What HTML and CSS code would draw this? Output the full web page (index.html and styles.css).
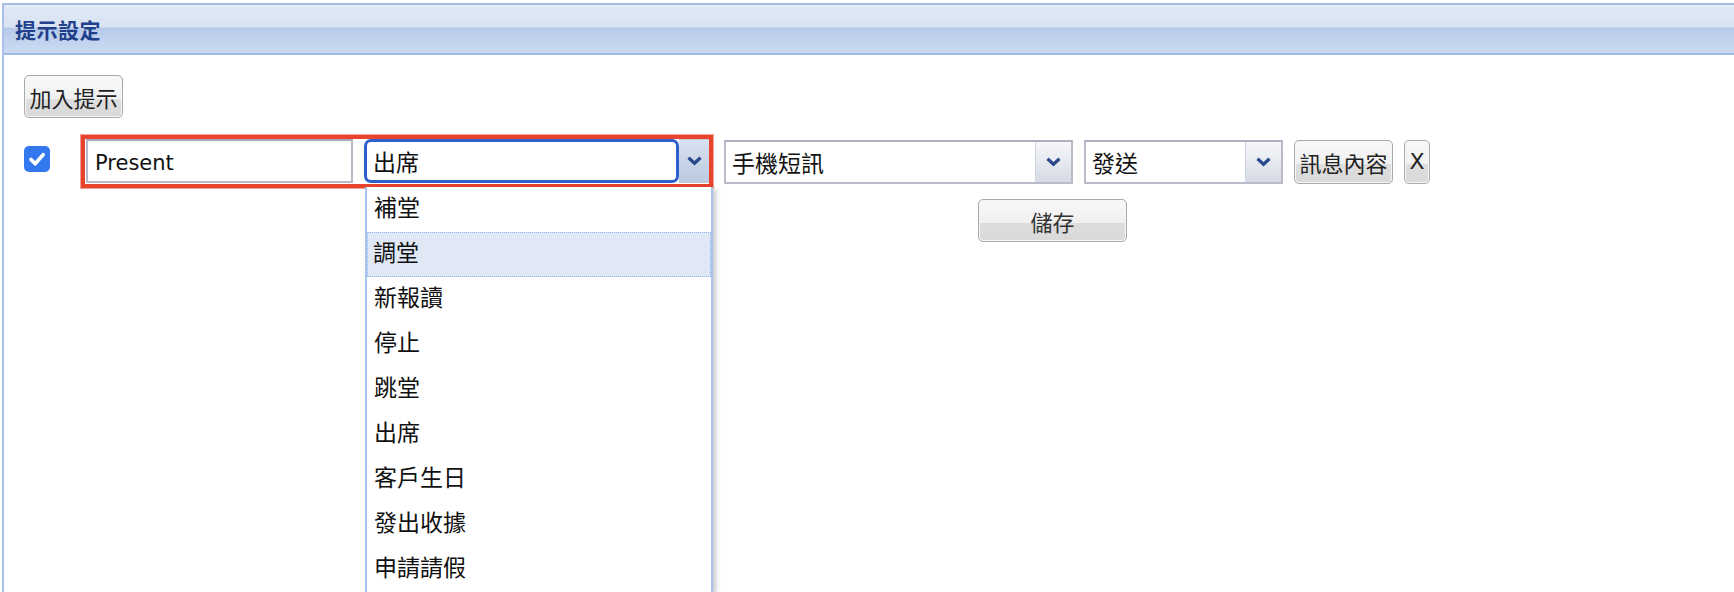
FILE: index.html
```html
<!DOCTYPE html>
<html lang="zh-Hant">
<head>
<meta charset="utf-8">
<title>提示設定</title>
<link rel="stylesheet" href="styles.css">
</head>
<body>
<div class="panel">
  <div class="panel-header"><span class="panel-title">提示設定</span></div>
  <div class="panel-body">
    <button class="btn btn-add">加入提示</button>
    <div class="rule-row">
      <span class="check">
        <svg width="26" height="26" viewBox="0 0 26 26"><rect width="26" height="26" rx="5" fill="#3478f0"/><path d="M7 13.5 L11.2 17.8 L19.2 8.6" fill="none" stroke="#fff" stroke-width="3.6" stroke-linecap="round" stroke-linejoin="round"/></svg>
      </span>
      <div class="mark-box">
        <input class="text-input" type="text" value="Present">
        <div class="combo-focus">
          <span class="focus-value">出席</span>
          <span class="arrow arrow-focus"><svg width="15" height="10" viewBox="0 0 15 10"><path d="M1.5 1.8 L7.5 7.3 L13.5 1.8" fill="none" stroke="#2b4a8c" stroke-width="3.2"/></svg></span>
          <ul class="combo-list">
            <li class="combo-item">補堂</li>
            <li class="combo-item combo-item-hover">調堂</li>
            <li class="combo-item">新報讀</li>
            <li class="combo-item">停止</li>
            <li class="combo-item">跳堂</li>
            <li class="combo-item">出席</li>
            <li class="combo-item">客戶生日</li>
            <li class="combo-item">發出收據</li>
            <li class="combo-item">申請請假</li>
          </ul>
        </div>
      </div>
      <div class="combo combo-sms">
        <span class="combo-value">手機短訊</span>
        <span class="arrow"><svg width="15" height="10" viewBox="0 0 15 10"><path d="M1.5 1.8 L7.5 7.3 L13.5 1.8" fill="none" stroke="#2b4a8c" stroke-width="3.2"/></svg></span>
      </div>
      <div class="combo combo-send">
        <span class="combo-value">發送</span>
        <span class="arrow"><svg width="15" height="10" viewBox="0 0 15 10"><path d="M1.5 1.8 L7.5 7.3 L13.5 1.8" fill="none" stroke="#2b4a8c" stroke-width="3.2"/></svg></span>
      </div>
      <button class="btn btn-msg">訊息內容</button>
      <button class="btn btn-x">X</button>
    </div>
    <div class="save-row"><button class="btn btn-save">儲存</button></div>
  </div>
</div>
</body>
</html>
```
FILE: styles.css
```css
html, body {
  margin: 0;
  padding: 0;
  background: #ffffff;
  height: 100%;
  overflow: hidden;
}
body {
  font-family: "DejaVu Sans", "Noto Sans CJK TC", sans-serif;
  color: #111;
}
.panel {
  margin: 3px 0 0 2px;
  border-left: 2px solid #a9c1e8;
  height: 100%;
  box-sizing: border-box;
}
.panel-header {
  height: 48px;
  border-top: 2px solid #a3bde5;
  border-bottom: 2px solid #a0bbe5;
  background: linear-gradient(to bottom, #e9eff9 0px, #dfe8f5 2px, #d8e3f3 22px, #b5c9ea 23px, #c0d2ee 34px, #cbdaf1 48px);
  display: flex;
  align-items: center;
  padding-left: 11px;
}
.panel-title {
  font-family: "Noto Sans CJK TC", sans-serif;
  font-weight: bold;
  font-size: 21px;
  color: #213f8a;
  letter-spacing: 0.5px;
}
.panel-body {
  padding: 20px 0 0 20px;
}
.btn {
  font-family: "DejaVu Sans", "Noto Sans CJK TC", sans-serif;
  font-size: 22px;
  color: #222;
  border: 1px solid #a9a9a9;
  border-radius: 5px;
  background: linear-gradient(to bottom, #f8f8f8 0%, #f0f0f0 55%, #dedede 56%, #d9d9d9 100%);
  box-shadow: inset 0 0 0 1px #f6f6f6;
  padding: 0;
  display: flex;
  align-items: center;
  justify-content: center;
  box-sizing: border-box;
}
.btn-add {
  width: 99px;
  height: 43px;
}
.rule-row {
  margin-top: 17px;
  display: flex;
  align-items: center;
  gap: 11px;
}
.check {
  width: 26px;
  height: 26px;
  margin-right: 20px;
  align-self: flex-start;
  margin-top: 11px;
  display: block;
}
.check svg { display: block; }
.mark-box {
  border: 4px solid #e8432c;
  box-shadow: 0 0 0 1px #f2a194;
  width: 632px;
  height: 53px;
  box-sizing: border-box;
  display: flex;
  align-items: flex-start;
  gap: 11px;
  padding-left: 1px;
}
.text-input {
  width: 267px;
  height: 44px;
  box-sizing: border-box;
  border: 2px solid #b9b9c9;
  border-top-color: #a9a9b9;
  font-family: "DejaVu Sans", sans-serif;
  font-size: 21px;
  color: #111;
  padding: 3px 0 0 7px;
  margin: 0;
  background: #fff;
  outline: none;
}
.combo-focus {
  position: relative;
  width: 345px;
  height: 44px;
  display: flex;
}
.focus-value {
  flex: 1;
  border: 3px solid #2e60cc;
  border-radius: 7px;
  box-sizing: border-box;
  background: #fff;
  display: flex;
  align-items: center;
  padding-left: 6px;
  font-size: 23px;
}
.arrow {
  width: 35px;
  display: flex;
  align-items: center;
  justify-content: center;
  border-left: 1px solid #cfd3dd;
  background: linear-gradient(to bottom, #f6f7f9 0%, #e6e9ef 50%, #d5dae4 100%);
}
.arrow-focus {
  width: 30px;
  border-left: none;
  border-top: 1px solid #c7cbd6;
  border-bottom: 1px solid #c7cbd6;
  box-sizing: border-box;
  background: linear-gradient(to bottom, #d9e2f0 0%, #c9d5e8 50%, #bccbe2 100%);
}
.combo-list {
  position: absolute;
  left: 1px;
  top: 48px;
  width: 348px;
  box-sizing: border-box;
  margin: 0;
  padding: 0;
  list-style: none;
  background: #fff;
  border-left: 2px solid #a7c3ef;
  border-right: 2px solid #a7c3ef;
  box-shadow: 3px 2px 5px rgba(0, 0, 0, 0.22);
  z-index: 5;
}
.combo-item {
  height: 45px;
  line-height: 41px;
  padding-left: 6px;
  font-size: 23px;
  color: #111;
  box-sizing: border-box;
  border: 1px dotted transparent;
}
.combo-item-hover {
  background: #e0e8f6;
  border: 1px dotted #8fb0e8;
  padding-left: 5px;
}
.combo {
  height: 44px;
  box-sizing: border-box;
  border: 2px solid #babaca;
  border-top-color: #aeaebe;
  display: flex;
  background: #fff;
}
.combo-value {
  flex: 1;
  display: flex;
  align-items: center;
  padding-left: 6px;
  font-size: 23px;
}
.combo-sms { width: 349px; }
.combo-send { width: 199px; }
.btn-msg {
  width: 99px;
  height: 44px;
}
.btn-x {
  width: 26px;
  height: 44px;
  font-family: "DejaVu Sans", sans-serif;
}
.save-row {
  margin-top: 11px;
  padding-left: 954px;
}
.btn-save {
  width: 149px;
  height: 43px;
  color: #333;
}
```
